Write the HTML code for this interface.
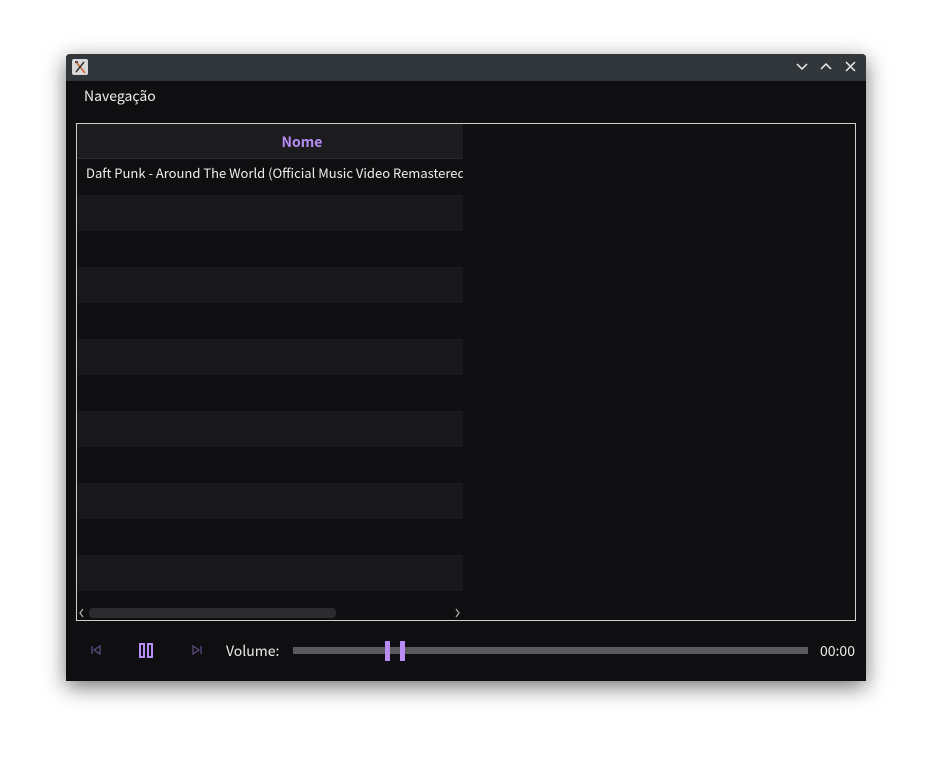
<!DOCTYPE html>
<html><head><style>
body{margin:0;width:933px;height:760px;background:#fff;position:relative;overflow:hidden;font-family:"Noto Sans CJK JP","Liberation Sans","DejaVu Sans",sans-serif}
.win{position:absolute;left:66px;top:54px;width:800px;height:627px;background:#0f0f11;box-shadow:0 6px 22px rgba(0,0,0,.55);border-radius:4px 4px 0 0;overflow:hidden}
.tb{position:absolute;left:0;top:0;width:800px;height:27px;background:#31363b}
.t{position:absolute;color:#eee;font-size:14px;line-height:18px}
.tbl{position:absolute;left:10px;top:69px;width:778px;height:496px;border:1px solid #cfcfcf;background:#0f0f11;overflow:hidden}
.hd{position:absolute;left:0;top:0;width:386px;height:34px;background:#1c1c1f;border-bottom:1px solid #2a2a2e;overflow:hidden}
.hd span{position:absolute;left:0;top:0;width:450px;text-align:center;line-height:36px;color:#b78cf4;font-weight:bold;font-size:14px}
.row{position:absolute;left:0;width:386px;height:36px}
</style></head><body>
<div class="win">
 <div class="tb">
  <div style="position:absolute;left:6px;top:5px;width:16px;height:16px;background:#d8d8d8;border-radius:2px"></div>
  <svg style="position:absolute;left:6px;top:5px" width="16" height="16" fill="none" stroke-width="1.5"><path d="M4 3l9 11" stroke="#d06030"/><path d="M12 3L4 13M3 3h3" stroke="#333"/></svg>
  <svg style="position:absolute;left:728px;top:6px" width="66" height="14" fill="none" stroke="#eee" stroke-width="1.5">
   <path d="M3 4l5 5 5-5"/><path d="M27 9l5-5 5 5"/><path d="M52 2l9 9M61 2l-9 9"/>
  </svg>
 </div>
 <div class="t" style="left:18px;top:33px">Navegação</div>
 <div class="tbl">
  <div class="hd"><span>Nome</span></div>
  <div class="row" style="top:71px;background:#19191b"></div>
  <div class="row" style="top:143px;background:#19191b"></div>
  <div class="row" style="top:215px;background:#19191b"></div>
  <div class="row" style="top:287px;background:#19191b"></div>
  <div class="row" style="top:359px;background:#19191b"></div>
  <div class="row" style="top:431px;background:#19191b"></div>
  <div class="t" style="left:9px;top:40px;font-size:13px;white-space:nowrap;width:377px;overflow:hidden">Daft Punk - Around The World (Official Music Video Remastered)</div>
  <div style="position:absolute;left:12px;top:484px;width:247px;height:10px;background:#2c2c2f;border-radius:4px"></div>
  <svg style="position:absolute;left:1px;top:484px" width="8" height="10" fill="none" stroke="#aaa" stroke-width="1.3"><path d="M5 1L2 5l3 4"/></svg>
  <svg style="position:absolute;left:377px;top:484px" width="8" height="10" fill="none" stroke="#aaa" stroke-width="1.3"><path d="M2 1l3 4-3 4"/></svg>
 </div>
 <svg style="position:absolute;left:24px;top:590px" width="12" height="12" fill="none" stroke="#5a4a80" stroke-width="1.3"><path d="M2 2v8M10 2L4 6l6 4z"/></svg>
 <div style="position:absolute;left:73px;top:589px;width:2px;height:11px;border:2px solid #b78cf4"></div>
 <div style="position:absolute;left:81px;top:589px;width:2px;height:11px;border:2px solid #b78cf4"></div>
 <svg style="position:absolute;left:125px;top:590px" width="12" height="12" fill="none" stroke="#5a4a80" stroke-width="1.3"><path d="M10 2v8M2 2l6 4-6 4z"/></svg>
 <div class="t" style="left:160px;top:588px">Volume:</div>
 <div style="position:absolute;left:227px;top:593px;width:515px;height:7px;background:#5a5a5c"></div>
 <div style="position:absolute;left:319px;top:587px;width:5px;height:20px;background:#b78cf4"></div>
 <div style="position:absolute;left:334px;top:587px;width:5px;height:20px;background:#b78cf4"></div>
 <div class="t" style="left:754px;top:588px">00:00</div>
</div>
</body></html>
